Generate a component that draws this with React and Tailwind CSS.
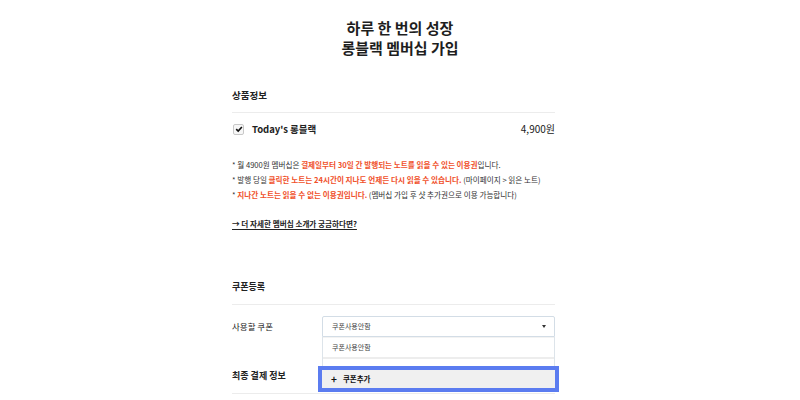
import React from "react";

const red = "text-[#f0502a] font-bold";

function Check() {
  return (
    <span className="w-[11px] h-[11px] rounded-[2px] border border-[#c8c8c8] bg-[#f7f7f7] flex items-center justify-center">
      <svg width="8" height="8" viewBox="0 0 10 10">
        <path d="M1.5 5.2 L4 7.6 L8.6 2.4" fill="none" stroke="#111" strokeWidth="2" />
      </svg>
    </span>
  );
}

export default function App() {
  return (
    <div
      className="w-full h-[400px] overflow-hidden bg-white text-[#222]"
      style={{ fontFamily: '"Noto Sans CJK KR", "Noto Sans", sans-serif' }}
    >
      <h1 className="pt-[18px] text-center text-[15px] leading-[20px] font-bold text-[#1e1e1e]">
        하루 한 번의 성장
        <br />
        롱블랙 멤버십 가입
      </h1>

      <div className="w-[336px] mx-auto pr-[13px]">
        {/* 상품정보 */}
        <div className="mt-[30px] pb-[10px] border-b border-[#ececec] text-[9.5px] leading-[14px] font-semibold">
          상품정보
        </div>
        <div className="mt-[9px] h-[14px] flex items-center justify-between">
          <div className="flex items-center gap-[8px] pl-px">
            <Check />
            <span className="text-[9.5px] leading-[14px] font-bold">Today's 롱블랙</span>
          </div>
          <span className="text-[10px] leading-[14px]">4,900원</span>
        </div>

        <div className="mt-[21px] text-[7.6px] leading-[15px] text-[#333]">
          <p>
            * 월 4900원 멤버십은 <span className={red}>결제일부터 30일 간 발행되는 노트를 읽을 수 있는 이용권</span>입니다.
          </p>
          <p>
            * 발행 당일 <span className={red}>클릭한 노트는 24시간이 지나도 언제든 다시 읽을 수 있습니다.</span> (마이페이지 &gt; 읽은 노트)
          </p>
          <p>
            * <span className={red}>지나간 노트는 읽을 수 없는 이용권입니다.</span> (멤버십 가입 후 샷 추가권으로 이용 가능합니다)
          </p>
        </div>

        <div className="mt-[15px] text-[7.6px] leading-[14px] font-bold underline underline-offset-2">
          → 더 자세한 멤버십 소개가 궁금하다면?
        </div>

        {/* 쿠폰등록 */}
        <div className="mt-[49px] pb-[10px] border-b border-[#ececec] text-[9px] leading-[14px] font-semibold">
          쿠폰등록
        </div>
        <div className="mt-[11px] flex">
          <div className="w-[90px] text-[8.5px] leading-[21px]">사용할 쿠폰</div>
          <div className="flex-1 relative">
            <div className="h-[21px] border border-[#d3dde6] rounded-t-[2px] pl-[9px] pr-[8px] flex items-center justify-between text-[7px] text-[#444]">
              <span>쿠폰사용안함</span>
              <span className="w-0 h-0 border-l-[2.5px] border-r-[2.5px] border-t-[3px] border-l-transparent border-r-transparent border-t-[#333]" />
            </div>
            <div className="absolute top-full left-0 right-0 bg-white border-x border-[#dde4ea] z-10">
              <div className="h-[20px] pl-[9px] flex items-center text-[7px] text-[#444] border-t border-[#f3f3f3]">
                쿠폰사용안함
              </div>
              <div className="h-[2px] bg-[#ededed]" />
              <div className="h-[11px] bg-white" />
              <div className="h-[18px] -mx-px bg-[#f0f0f0] outline-[4px] outline-solid outline-[#5b7cf0] flex items-center pl-[9px] gap-[6px] text-[7.5px] font-bold text-[#111]">
                <span className="text-[10px] leading-none font-bold">+</span>
                <span>쿠폰추가</span>
              </div>
            </div>
          </div>
        </div>

        {/* 최종 결제 정보 */}
        <div className="mt-[32px] pb-[10px] border-b border-[#ececec] text-[9px] leading-[14px] font-semibold">
          최종 결제 정보
        </div>
      </div>
    </div>
  );
}
